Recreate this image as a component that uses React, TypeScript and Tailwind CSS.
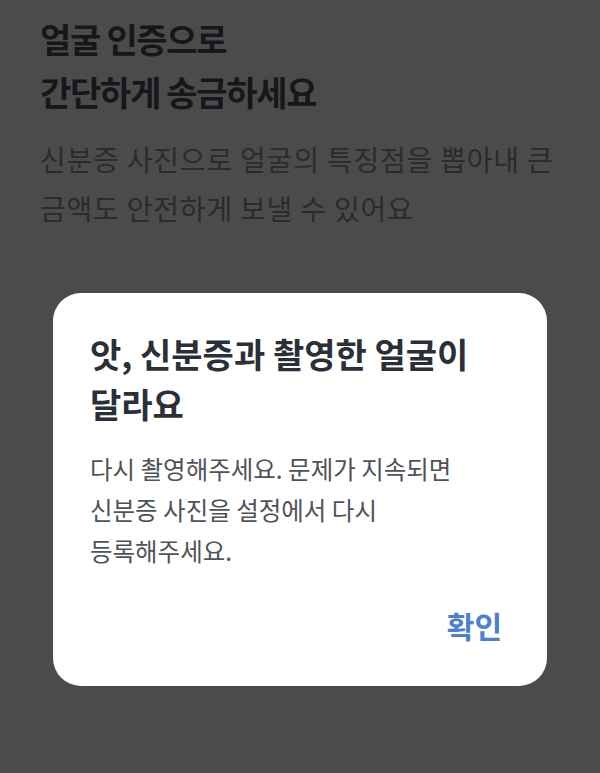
import React from 'react';

const font = { fontFamily: '"Noto Sans CJK KR", "Noto Sans", sans-serif' };

export default function App() {
  return (
    <div className="relative w-[600px] h-[773px] overflow-hidden bg-[#4b4b4b]" style={font}>
      {/* dimmed page behind the dialog */}
      <div className="px-[40px] pt-[12px]">
        <h1 className="text-[34px] leading-[53px] font-bold tracking-[-1.3px] text-[#17171b]">
          얼굴 인증으로
          <br />
          간단하게 송금하세요
        </h1>
        <p className="mt-[17px] text-[28px] leading-[49px] tracking-[0.8px] text-[#2a2b2f]">
          신분증 사진으로 얼굴의 특징점을 뽑아내 큰
          <br />
          금액도 안전하게 보낼 수 있어요
        </p>
      </div>

      {/* dialog */}
      <div className="absolute left-[53px] top-[293px] w-[494px] h-[393px] rounded-[28px] bg-white px-[37px] pt-[36px]">
        <h2 className="text-[34px] leading-[50px] font-bold text-[#2b3038]">
          앗, 신분증과 촬영한 얼굴이
          <br />
          달라요
        </h2>
        <p className="mt-[19px] text-[24.5px] leading-[41px] text-[#4f5359]">
          다시 촬영해주세요. 문제가 지속되면
          <br />
          신분증 사진을 설정에서 다시
          <br />
          등록해주세요.
        </p>
        <div className="mt-[34px] flex justify-end pr-[8px]">
          <button className="text-[30px] font-bold leading-[40px] text-[#4a80cc]">확인</button>
        </div>
      </div>
    </div>
  );
}
